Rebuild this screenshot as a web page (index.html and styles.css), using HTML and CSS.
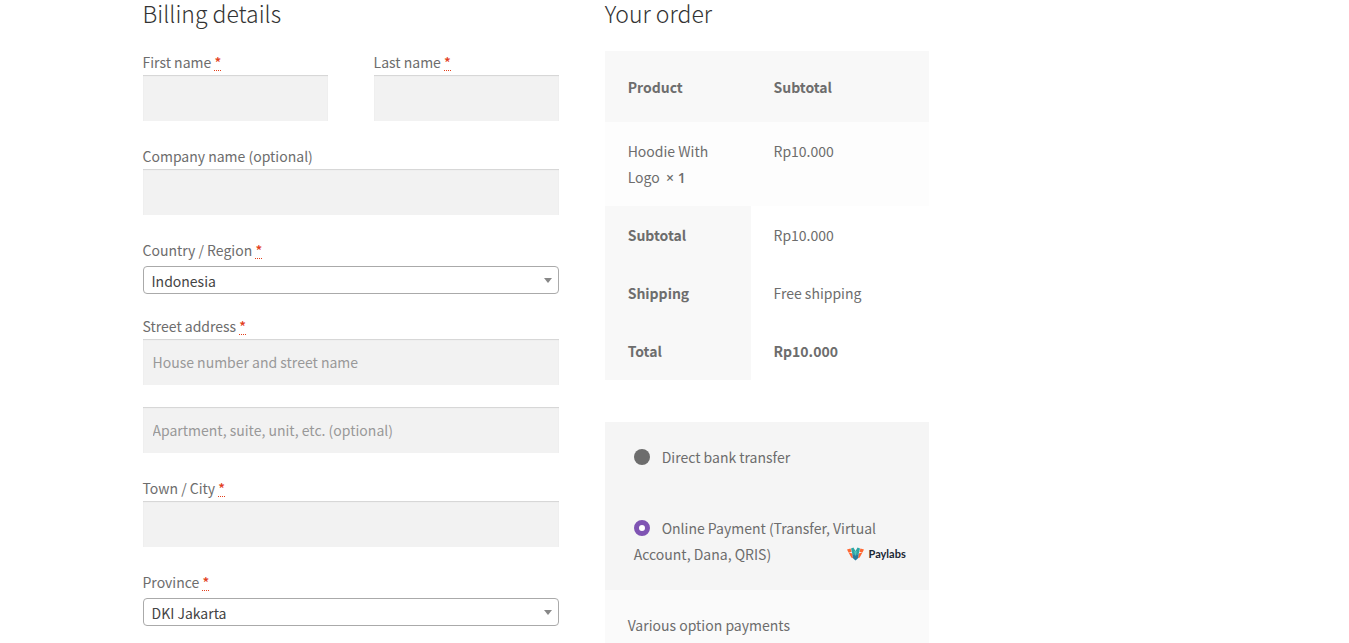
FILE: index.html
```html
<!DOCTYPE html>
<html lang="en">
<head>
<meta charset="utf-8">
<meta name="viewport" content="width=device-width, initial-scale=1">
<title>Checkout</title>
<link rel="stylesheet" href="styles.css">
</head>
<body>
<main class="page">
<form class="checkout">
  <section class="billing">
    <h3 class="heading">Billing details</h3>
    <div class="fields">
      <div class="name-row">
        <div class="field">
          <label class="label" for="first">First name <abbr class="required" title="required">*</abbr></label>
          <input class="input" id="first" type="text">
        </div>
        <div class="field">
          <label class="label" for="last">Last name <abbr class="required" title="required">*</abbr></label>
          <input class="input" id="last" type="text">
        </div>
      </div>
      <div class="field">
        <label class="label" for="company">Company name (optional)</label>
        <input class="input" id="company" type="text">
      </div>
      <div class="field field-select">
        <label class="label" for="country">Country / Region <abbr class="required" title="required">*</abbr></label>
        <div class="select-wrap"><select class="select" id="country"><option>Indonesia</option></select></div>
      </div>
      <div class="field">
        <label class="label" for="street">Street address <abbr class="required" title="required">*</abbr></label>
        <input class="input" id="street" type="text" placeholder="House number and street name">
      </div>
      <div class="field">
        <input class="input" type="text" aria-label="Apartment, suite, unit, etc. (optional)" placeholder="Apartment, suite, unit, etc. (optional)">
      </div>
      <div class="field">
        <label class="label" for="city">Town / City <abbr class="required" title="required">*</abbr></label>
        <input class="input" id="city" type="text">
      </div>
      <div class="field field-select">
        <label class="label" for="province">Province <abbr class="required" title="required">*</abbr></label>
        <div class="select-wrap"><select class="select" id="province"><option>DKI Jakarta</option></select></div>
      </div>
    </div>
  </section>

  <section class="order">
    <h3 class="heading">Your order</h3>
    <table class="summary">
      <thead>
        <tr><th scope="col">Product</th><th scope="col">Subtotal</th></tr>
      </thead>
      <tbody>
        <tr><td>Hoodie With Logo&nbsp; <strong class="quantity">×&nbsp;1</strong></td><td>Rp10.000</td></tr>
      </tbody>
      <tfoot>
        <tr><th scope="row">Subtotal</th><td>Rp10.000</td></tr>
        <tr><th scope="row">Shipping</th><td>Free shipping</td></tr>
        <tr><th scope="row">Total</th><td><strong>Rp10.000</strong></td></tr>
      </tfoot>
    </table>
    <ul class="payments">
      <li>
        <label class="method"><input class="radio" type="radio" name="payment">Direct bank transfer</label>
      </li>
      <li>
        <label class="method"><input class="radio" type="radio" name="payment" checked>Online Payment (Transfer, Virtual
          <span class="logo">
            <svg class="logo-mark" viewBox="0 0 17 14" aria-hidden="true">
              <path fill="#ff6731" d="M0 2.5 3.6 1.4 4.5 5 1.3 5zM17 2.5 13.4 1.4 12.5 5 15.7 5zM1.3 5 5.2 6.4 6 11.2 4.3 10.6zM15.7 5 11.8 6.4 11 11.2 12.7 10.6z"/>
              <path fill="#2ca6a4" d="M4 1.4 6.4.4 8.5 4 10.6.4 13 1.4 11.8 6.4 8.5 9 5.2 6.4z"/>
              <path fill="#287c9e" d="M5.2 6.4 8.5 8.4 11.8 6.4 11 11.2 8.5 13.5 6 11.2z"/>
              <path fill="#53c4bc" d="M7 4.2h3L8.5 9z"/>
            </svg>
            <span>Paylabs</span>
          </span>
          Account, Dana, QRIS)</label>
      </li>
    </ul>
    <p class="payment-note">Various option payments</p>
  </section>
</form>
</main>
</body>
</html>
```
FILE: styles.css
```css
*, *::before, *::after { box-sizing: border-box; }

body {
  margin: 0;
  color: #6d6d6d;
  background: #fff;
  font: 400 14px/26px "Noto Sans CJK SC", "Noto Sans", sans-serif;
}

.page {
  max-width: 1064px;
  margin: 0 auto;
}

.checkout {
  display: grid;
  grid-template-columns: 416fr 324fr;
  column-gap: 46px;
  width: 73.9%;
  align-items: start;
}

.heading {
  margin: 0;
  color: #333;
  font-size: 23px;
  font-weight: 300;
  line-height: 26px;
}

.fields {
  display: flex;
  flex-direction: column;
  gap: 22px;
  margin-top: 23px;
}

.name-row {
  display: grid;
  grid-template-columns: 1fr 1fr;
  gap: 46px;
}

.label { display: block; }

.required {
  color: #e2401c;
  font-weight: 500;
  text-decoration: none;
  border-bottom: 1px dotted #e2401c;
  display: inline-block;
  line-height: 16px;
  cursor: help;
}

.input {
  display: block;
  width: 100%;
  height: 46px;
  padding: 0 10px;
  border: 0;
  border-radius: 0;
  color: #43454b;
  background: #f2f2f2;
  box-shadow: inset 0 1px 1px rgba(0, 0, 0, .125);
  font: inherit;
}

.input::placeholder { color: #999; opacity: 1; }

.field-select { margin-bottom: -3px; }

.select-wrap {
  position: relative;
  margin-top: 3px;
}

.select-wrap::after {
  content: "";
  position: absolute;
  top: 12px;
  right: 7px;
  border: 4px solid transparent;
  border-top: 5px solid #888;
  border-bottom: 0;
  pointer-events: none;
}

.select {
  display: block;
  appearance: none;
  width: 100%;
  height: 28px;
  padding: 1px 24px 0 8px;
  border: 1px solid #aaa;
  border-radius: 4px;
  color: #444;
  background: #fff;
  font: inherit;
}

.summary {
  width: 100%;
  margin: 25px 0 42px;
  border-collapse: collapse;
  table-layout: fixed;
}

.summary th, .summary td {
  padding: 16px 23px;
  text-align: left;
  vertical-align: top;
}

.summary th:first-child { width: 45%; }
.summary th { font-weight: 600; background: #f8f8f8; }
.summary strong { font-weight: 600; }
.summary .quantity { font-family: "Open Sans", "Noto Sans", sans-serif; line-height: 16px; }
.summary thead th { padding: 23px 23px 22px; }
.summary tbody td { background: #fdfdfd; }

.payments {
  margin: 0;
  padding: 0;
  list-style: none;
  background: #f5f5f5;
}

.payments li { padding: 22px 23px 23px 29px; }
.method { display: block; }

.radio {
  appearance: none;
  width: 16px;
  height: 16px;
  margin: 0 12px 0 0;
  border-radius: 50%;
  background: #6d6d6d;
  vertical-align: -2px;
}

.radio:checked {
  border: 5px solid #7f54b3;
  background: #fff;
}

.logo {
  float: right;
  display: flex;
  align-items: center;
  gap: 5px;
  color: #1b2733;
  font: 700 11px/26px Lato, sans-serif;
}

.logo-mark { width: 17px; height: 14px; }

.payment-note {
  margin: 0;
  padding: 22px 23px;
  background: #fafafa;
}
```
